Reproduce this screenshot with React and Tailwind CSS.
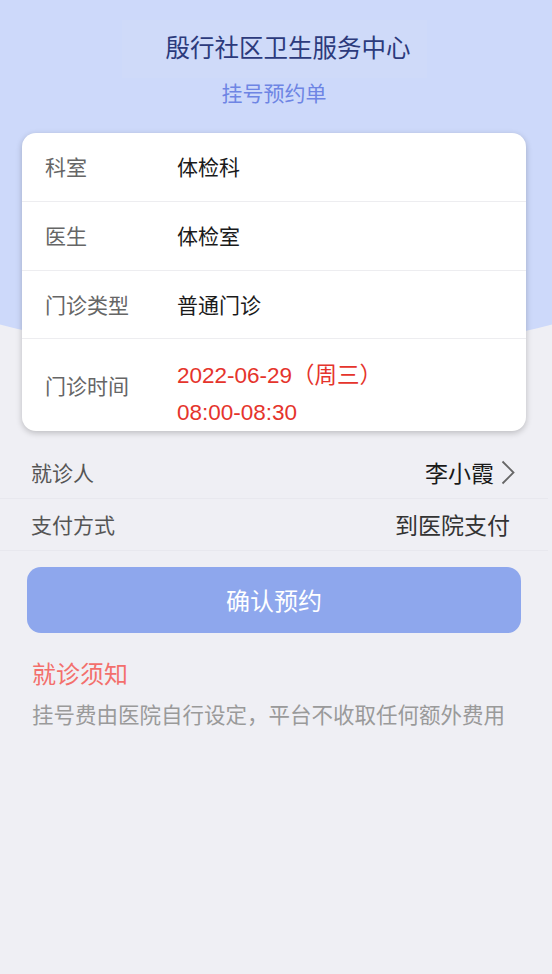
import React from "react"

const rows = [
  { label: "科室", value: "体检科", h: "h-[69px]" },
  { label: "医生", value: "体检室", h: "h-[69px]" },
  { label: "门诊类型", value: "普通门诊", h: "h-[68px]" },
]

export default function App() {
  return (
    <div
      className="relative w-[552px] min-h-[974px] overflow-hidden bg-[#efeff4]"
      style={{ fontFamily: '"Noto Sans CJK SC", "Noto Sans", sans-serif' }}
    >
      {/* 顶部蓝色弧形背景 */}
      <div className="absolute top-0 left-[-276px] w-[1104px] h-[358px] bg-[#cdd9fa] rounded-b-[552px_250px]" />

      <div className="relative flex flex-col pr-[4px]">
        {/* 标题 */}
        <div className="flex flex-col items-center pt-[20px]">
          <div className="w-[305px] h-[58px] flex items-center pl-[44px] pb-[4px] bg-[#cfdaf9] text-[24.5px] text-[#2c3a7c]">
            殷行社区卫生服务中心
          </div>
          <div className="-mt-[1px] h-[30px] leading-[30px] text-[21px] text-[#6e85e4]">
            挂号预约单
          </div>
        </div>

        {/* 预约信息卡片 */}
        <div className="mx-[22px] mt-[26px] bg-white rounded-[14px] shadow-[0_2px_6px_rgba(0,0,0,0.22)] overflow-hidden">
          {rows.map((r) => (
            <div key={r.label} className={`flex items-center ${r.h} px-[23px] border-b border-[#ededf0]`}>
              <div className="w-[132px] text-[21px] text-[#666]">{r.label}</div>
              <div className="text-[21px] text-[#1a1a1a]">{r.value}</div>
            </div>
          ))}
          <div className="flex items-center h-[92px] px-[23px]">
            <div className="w-[132px] text-[21px] text-[#666] mt-[2px]">门诊时间</div>
            <div
              className="flex flex-col mt-[18px] text-[22.5px] leading-[37px] text-[#e5342c]"
              style={{ fontFamily: '"Liberation Sans", "Noto Sans CJK SC", sans-serif' }}
            >
              <span>2022-06-29（周三）</span>
              <span>08:00-08:30</span>
            </div>
          </div>
        </div>

        {/* 就诊人 / 支付方式 */}
        <div className="mt-[16px] flex flex-col">
          <div className="flex items-center justify-between h-[52px] pl-[31px] pr-[33px] border-b border-[#e8e8ee]">
            <span className="text-[21px] text-[#555]">就诊人</span>
            <div className="flex items-center gap-[7px]">
              <span className="text-[23px] text-[#1a1a1a]">李小霞</span>
              <svg width="14" height="25" viewBox="0 0 14 25" fill="none">
                <path d="M1.5 1.5 L12.5 12.5 L1.5 23.5" stroke="#666" strokeWidth="1.8" />
              </svg>
            </div>
          </div>
          <div className="flex items-center justify-between h-[52px] pl-[31px] pr-[38px] border-b border-[#e8e8ee]">
            <span className="text-[21px] text-[#555]">支付方式</span>
            <span className="text-[23px] text-[#333]">到医院支付</span>
          </div>
        </div>

        {/* 确认按钮 */}
        <div className="mx-[27px] mt-[16px] h-[66px] rounded-[14px] bg-[#8ea7ed] flex items-center justify-center text-[24px] text-white">
          确认预约
        </div>

        {/* 就诊须知 */}
        <div className="px-[32px] mt-[22px] flex flex-col">
          <div className="h-[36px] leading-[36px] text-[24px] text-[#f36f6c]">就诊须知</div>
          <div className="mt-[8px] h-[30px] leading-[30px] text-[21.5px] text-[#9a9a9a] whitespace-nowrap">
            挂号费由医院自行设定，平台不收取任何额外费用
          </div>
        </div>
      </div>
    </div>
  )
}
